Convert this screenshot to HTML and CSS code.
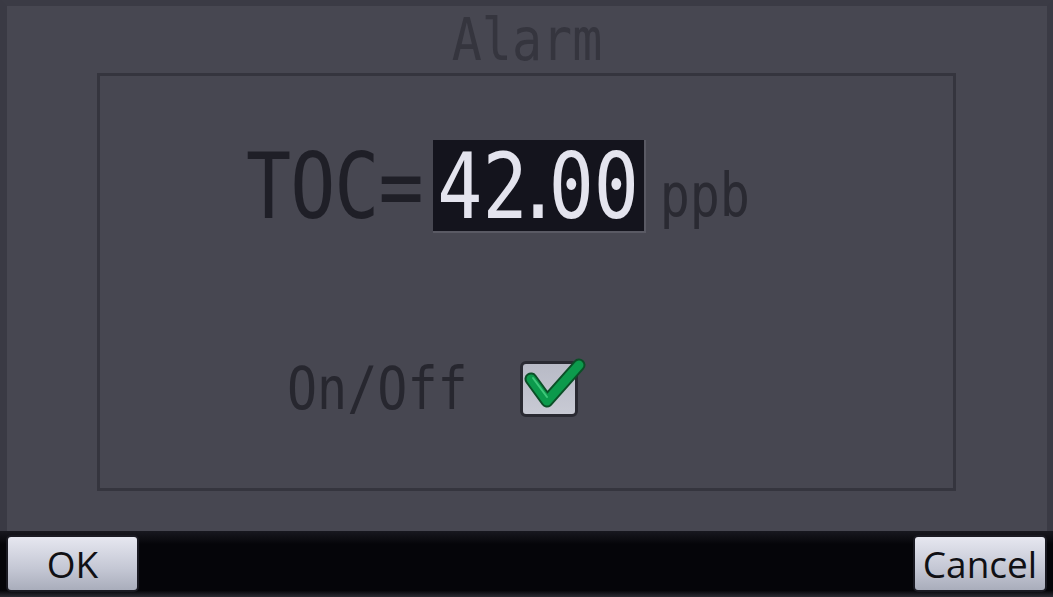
FILE: index.html
```html
<!DOCTYPE html>
<html lang="en">
<head>
    <meta charset="UTF-8">
    <title>Alarm</title>
    <link rel="stylesheet" href="styles.css">
</head>
<body>
    <div class="screen">
        <div class="panel">
            <h1 class="title"><span class="lcd">Alarm</span></h1>
            <div class="box">
                <div class="toc-row">
                    <span class="lcd toc">TOC=</span>
                    <div class="value"><span class="lcd">4<span class="tight">2.</span>00</span></div>
                    <span class="lcd unit">ppb</span>
                </div>
                <div class="switch-row">
                    <span class="lcd switch-label">On/Off</span>
                    <div class="checkbox">
                        <svg class="check" width="66" height="62" viewBox="0 0 66 62">
                            <path d="M10 24 L26 46 L58 10" fill="none" stroke="#0b4f27" stroke-width="13" stroke-linecap="round" stroke-linejoin="round"/>
                            <path d="M10 24 L26 46 L58 10" fill="none" stroke="#0c9a4c" stroke-width="9" stroke-linecap="round" stroke-linejoin="round"/>
                            <path d="M12 23 L26 42" fill="none" stroke="#3fc87a" stroke-width="2" stroke-linecap="round"/>
                        </svg>
                    </div>
                </div>
            </div>
        </div>
        <div class="bar">
            <button class="btn btn-ok">OK</button>
            <button class="btn btn-cancel">Cancel</button>
        </div>
    </div>
</body>
</html>
```

FILE: styles.css
```css
body {
    margin: 0;
    background: #303038;
}
.screen {
    width: 1053px;
    height: 597px;
    display: flex;
    flex-direction: column;
    overflow: hidden;
}
.panel {
    height: 525px;
    background: #474751;
    border-top: 6px solid #3b3b45;
    border-left: 7px solid #3a3a44;
    border-right: 6px solid #3a3a44;
    display: flex;
    flex-direction: column;
}
.lcd {
    font-family: "DejaVu Sans Mono", monospace;
    display: inline-block;
}
.title {
    margin: 0;
    height: 67px;
    font-weight: normal;
    font-size: 50px;
    color: #35353e;
    text-align: center;
    line-height: 68px;
}
.title .lcd {
    transform: scaleY(1.16);
}
.box {
    margin: 0 91px 0 90px;
    height: 412px;
    border: 3px solid #35353e;
    display: flex;
    flex-direction: column;
}
.toc-row {
    display: flex;
    align-items: center;
    margin-top: 64px;
    padding-left: 146px;
    height: 93px;
}
.toc {
    font-size: 75px;
    color: #1f1f27;
    transform: scaleY(1.2);
    letter-spacing: -1px;
}
.value {
    margin-left: 10px;
    width: 213px;
    height: 93px;
    background: #14141d;
    border-right: 2px solid #5a5a64;
    border-bottom: 2px solid #5a5a64;
    box-sizing: border-box;
    display: flex;
    align-items: center;
    justify-content: center;
}
.value .lcd {
    font-size: 75px;
    color: #e4e4ee;
    transform: scaleY(1.2);
    margin-top: 2px;
}
.tight {
    letter-spacing: -12px;
}
.unit {
    font-size: 50px;
    color: #2a2a32;
    margin-left: 14px;
    margin-top: 18px;
    transform: scaleY(1.2);
}
.switch-row {
    display: flex;
    align-items: center;
    margin-top: 127px;
    padding-left: 187px;
}
.switch-label {
    font-size: 50px;
    color: #27272f;
    transform: scaleY(1.18);
}
.checkbox {
    position: relative;
    margin-left: 52px;
    width: 58px;
    height: 56px;
    box-sizing: border-box;
    border: 3px solid #2a2a32;
    border-radius: 6px;
    background: linear-gradient(#b8bac6, #c8cad4);
}
.check {
    position: absolute;
    left: -2px;
    top: -9px;
}
.bar {
    flex: 1;
    background: linear-gradient(#18181f, #050509 20%, #050509 90%, #2c2c34);
    display: flex;
    justify-content: space-between;
    align-items: flex-start;
    padding: 4px 6px 0 6px;
}
.btn {
    height: 57px;
    border: 2px solid #1a1a22;
    border-radius: 5px;
    background: linear-gradient(#e6e7f0, #c4c7d4 60%, #a9adbb);
    font-family: "Open Sans", sans-serif;
    font-size: 37px;
    color: #101014;
    padding: 0;
    line-height: 50px;
}
.btn-ok {
    width: 133px;
}
.btn-cancel {
    width: 134px;
}
```
